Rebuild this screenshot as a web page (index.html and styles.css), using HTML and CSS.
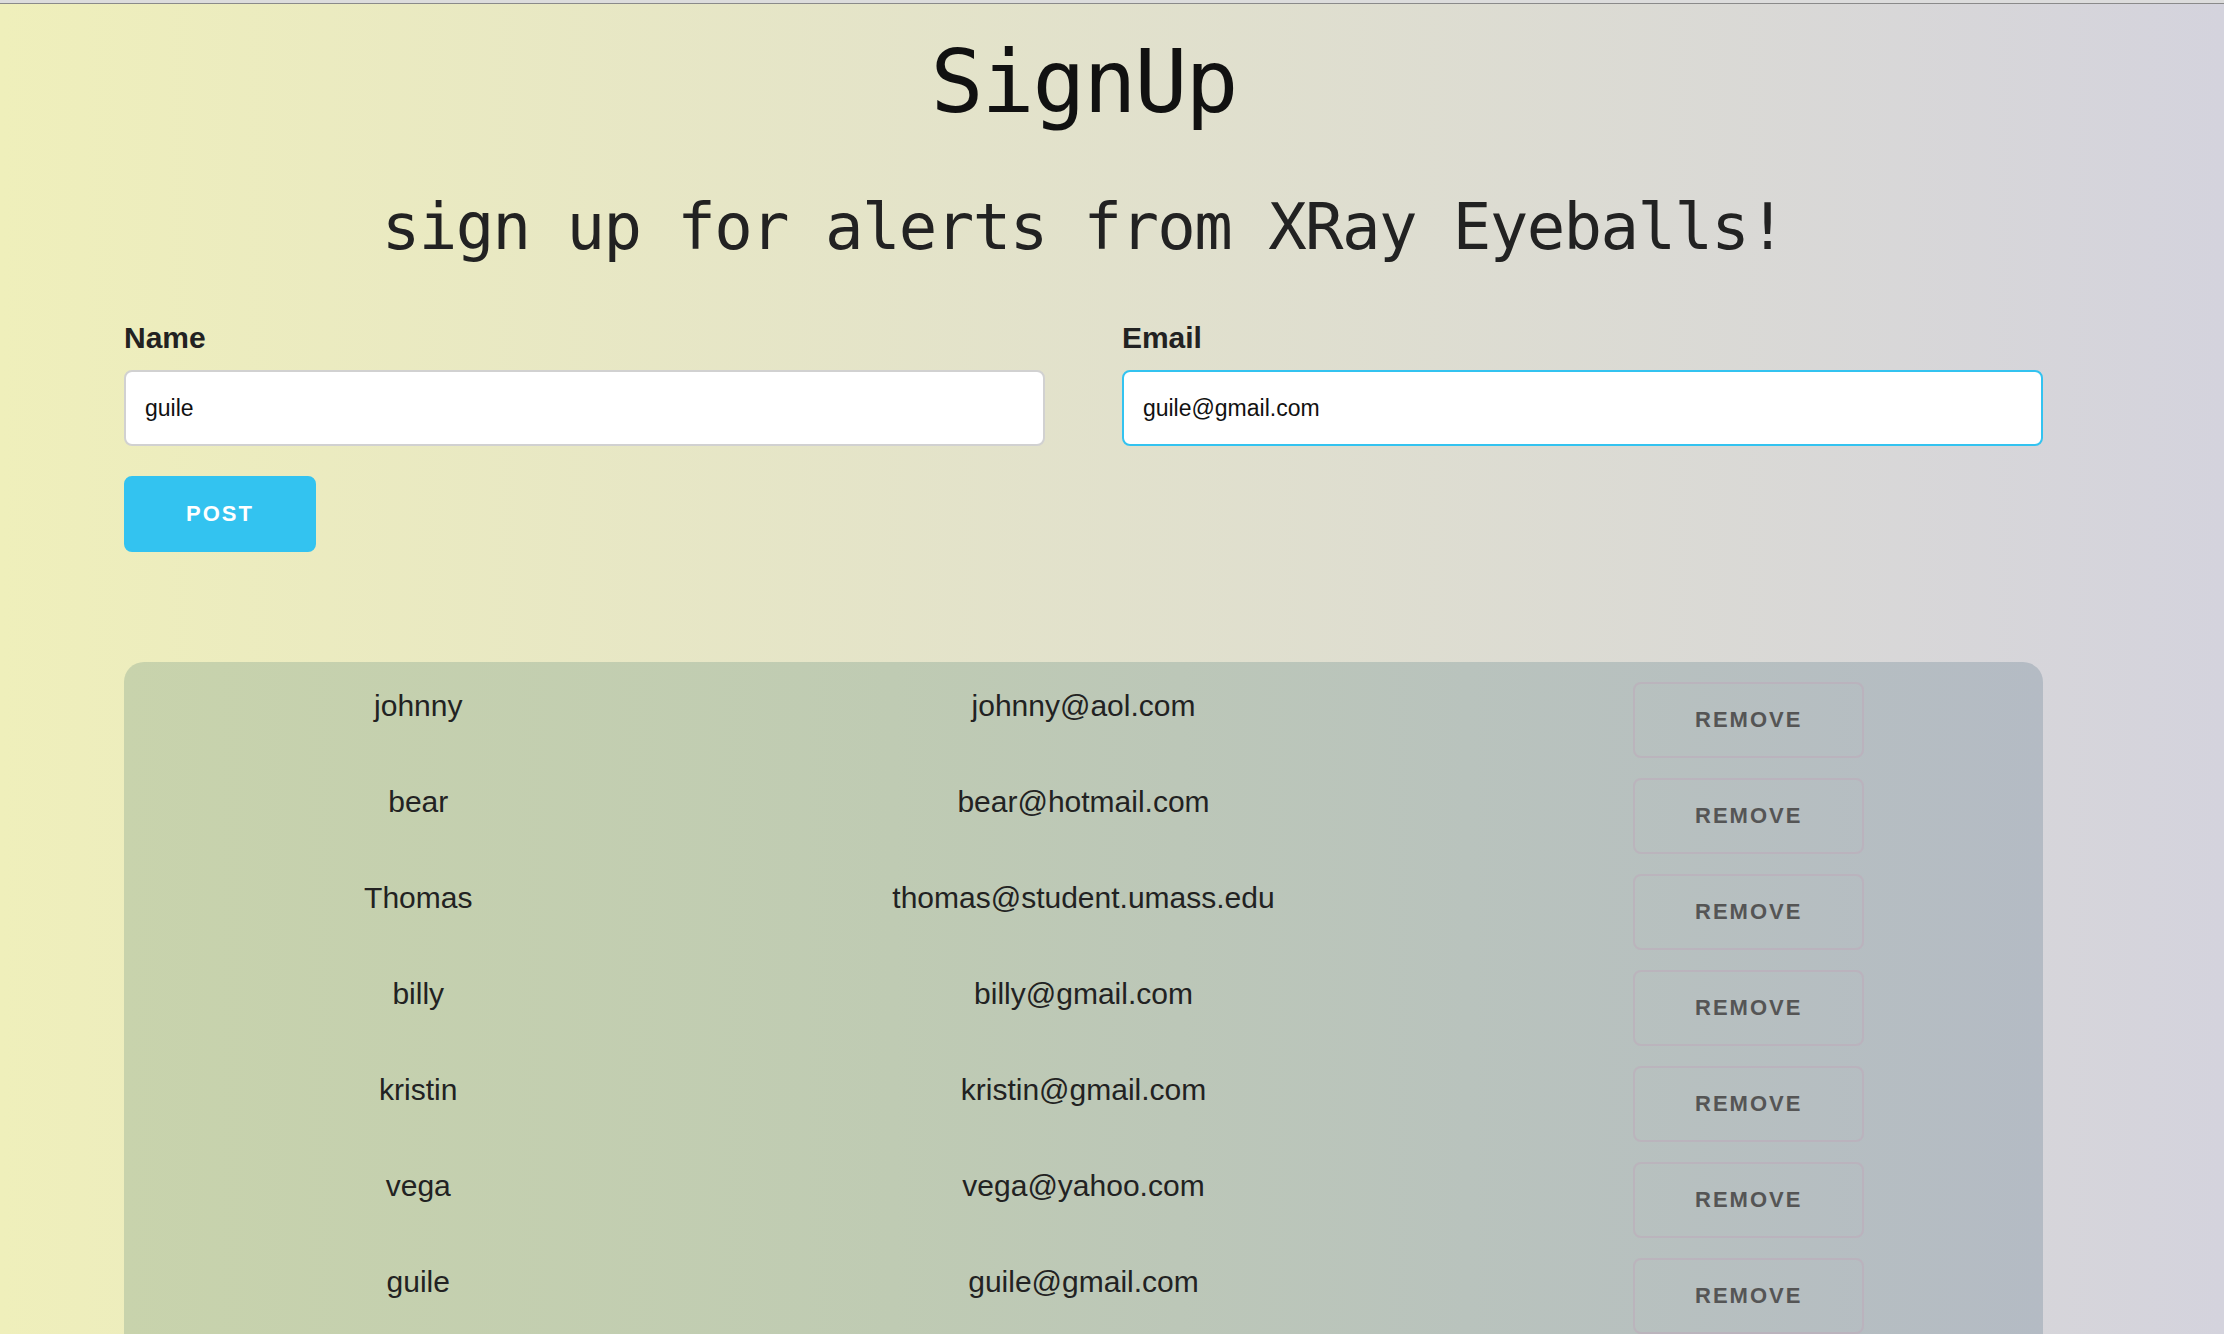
FILE: index.html
```html
<!DOCTYPE html>
<html lang="en">
<head>
<meta charset="utf-8">
<title>SignUp</title>
<link rel="stylesheet" href="styles.css">
</head>
<body>
<div class="chrome-line"></div>
<div class="container">
  <h1 class="title">SignUp</h1>
  <h2 class="subtitle">sign up for alerts from XRay Eyeballs!</h2>

  <form class="signup-form">
    <div class="form-row">
      <div class="field">
        <label class="field-label" for="name">Name</label>
        <input class="text-input" id="name" type="text" value="guile">
      </div>
      <div class="field">
        <label class="field-label" for="email">Email</label>
        <input class="text-input text-input--focus" id="email" type="email" value="guile@gmail.com">
      </div>
    </div>
    <button class="btn btn-primary" type="button">Post</button>
  </form>

  <div class="list-panel">
    <div class="list-row"><div class="cell">johnny</div><div class="cell">johnny@aol.com</div><div class="cell"><button class="btn btn-ghost" type="button">Remove</button></div></div>
    <div class="list-row"><div class="cell">bear</div><div class="cell">bear@hotmail.com</div><div class="cell"><button class="btn btn-ghost" type="button">Remove</button></div></div>
    <div class="list-row"><div class="cell">Thomas</div><div class="cell">thomas@student.umass.edu</div><div class="cell"><button class="btn btn-ghost" type="button">Remove</button></div></div>
    <div class="list-row"><div class="cell">billy</div><div class="cell">billy@gmail.com</div><div class="cell"><button class="btn btn-ghost" type="button">Remove</button></div></div>
    <div class="list-row"><div class="cell">kristin</div><div class="cell">kristin@gmail.com</div><div class="cell"><button class="btn btn-ghost" type="button">Remove</button></div></div>
    <div class="list-row"><div class="cell">vega</div><div class="cell">vega@yahoo.com</div><div class="cell"><button class="btn btn-ghost" type="button">Remove</button></div></div>
    <div class="list-row"><div class="cell">guile</div><div class="cell">guile@gmail.com</div><div class="cell"><button class="btn btn-ghost" type="button">Remove</button></div></div>
  </div>
</div>
</body>
</html>
```

FILE: styles.css
```css
html {
  overflow: hidden;
}

body {
  margin: 0;
  min-height: 100vh;
  background: linear-gradient(to right, #efefbb, #d4d3dd);
  font-family: "Liberation Sans", Arial, sans-serif;
  font-size: 30px;
  line-height: 1.6;
  color: #222;
}

.chrome-line {
  height: 3px;
  background: #dcdcdc;
  border-bottom: 1px solid #8a8a8a;
}

.container {
  width: 1919px;
  margin-left: 124px;
}

.title {
  margin: 34px 0 0;
  font-family: "DejaVu Sans Mono", monospace;
  font-weight: normal;
  font-size: 88px;
  line-height: 1;
  letter-spacing: -2px;
  text-align: center;
  color: #111;
}

.subtitle {
  margin: 69px 0 0;
  font-family: "DejaVu Sans Mono", monospace;
  font-weight: normal;
  font-size: 64px;
  line-height: 1;
  letter-spacing: -1.6px;
  text-align: center;
  color: #222;
}

.signup-form {
  margin-top: 55px;
}

.form-row {
  display: grid;
  grid-template-columns: 1fr 1fr;
  column-gap: 4%;
}

.field-label {
  display: block;
  font-weight: bold;
  font-size: 30px;
  line-height: 48px;
  margin-bottom: 8px;
  color: #222;
}

.text-input {
  display: block;
  box-sizing: border-box;
  width: 100%;
  height: 76px;
  margin: 0 0 30px;
  padding: 12px 19px;
  background: #fff;
  border: 2px solid #d1d1d1;
  border-radius: 8px;
  font-family: "Liberation Sans", Arial, sans-serif;
  font-size: 23px;
  color: #111;
  outline: none;
}

.text-input--focus {
  border-color: #33c3f0;
}

.btn {
  display: inline-block;
  box-sizing: border-box;
  height: 76px;
  padding: 0 60px;
  border-radius: 8px;
  font-family: "Liberation Sans", Arial, sans-serif;
  font-size: 22px;
  font-weight: bold;
  line-height: 72px;
  letter-spacing: 2px;
  text-transform: uppercase;
  cursor: pointer;
  margin: 0 0 20px;
}

.btn-primary {
  background: #33c3f0;
  border: 2px solid #33c3f0;
  color: #fff;
}

.btn-ghost {
  background: transparent;
  border: 2px solid rgba(190, 170, 185, 0.55);
  color: #555;
}

.list-panel {
  margin-top: 90px;
  padding: 20px 0 40px;
  border-radius: 20px;
  background: linear-gradient(to right, #c8d3ac, #bfcbb3 40%, #b9c3bd 70%, #b4bbc4);
}

.list-row {
  display: grid;
  grid-template-columns: 1fr 1fr 1fr;
  column-gap: 4%;
}

.cell {
  text-align: center;
  font-size: 30px;
  line-height: 48px;
  color: #222;
}
```
